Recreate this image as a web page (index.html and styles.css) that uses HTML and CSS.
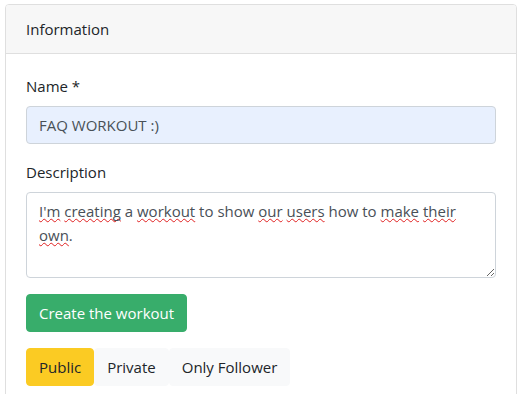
FILE: index.html
```html
<!DOCTYPE html>
<html lang="en">
<head>
<meta charset="utf-8">
<title>Information</title>
<link rel="stylesheet" href="styles.css">
</head>
<body>
<div class="page">
  <div class="card">
    <div class="card-header">Information</div>
    <div class="card-body">
      <div class="form-group">
        <label class="label">Name *</label>
        <div class="input autofill">FAQ WORKOUT :)</div>
      </div>
      <div class="form-group">
        <label class="label">Description</label>
        <div class="textarea"><span class="sp">I'm</span> <span class="sp">creating</span> a <span class="sp">workout</span> to show <span class="sp">our</span> <span class="sp">users</span> how to <span class="sp">make</span> <span class="sp">their</span> <span class="sp">own</span>.</div>
      </div>
      <div class="form-group">
        <button class="btn btn-success">Create the workout</button>
      </div>
      <div class="btn-group">
        <button class="btn btn-warning">Public</button>
        <button class="btn btn-light">Private</button>
        <button class="btn btn-light">Only Follower</button>
      </div>
    </div>
  </div>
</div>
</body>
</html>
```
FILE: styles.css
```css
* { box-sizing: border-box; }
html, body { margin: 0; padding: 0; background: #fff; }
body {
  font-family: "Open Sans", "Noto Sans", sans-serif;
  font-size: 15px;
  line-height: 24px;
  color: #212529;
}
.page { padding: 4px 5px; }
.card {
  border: 1px solid #dfdfdf;
  border-radius: 4px;
  background: #fff;
}
.card-header {
  background: #f7f7f7;
  border-bottom: 1px solid #dfdfdf;
  padding: 12px 20px;
  border-radius: 3px 3px 0 0;
}
.card-body { padding: 20px; }
.form-group { margin-bottom: 16px; }
.label { display: block; margin-bottom: 8px; }
.input {
  height: 38px;
  padding: 6px 12px;
  border: 1px solid #ced4da;
  border-radius: 4px;
  color: #495057;
}
.autofill { background: #e8f0fe; }
.textarea {
  height: 86px;
  padding: 6px 12px;
  border: 1px solid #ced4da;
  border-radius: 4px;
  color: #495057;
  overflow: auto;
  resize: vertical;
}
.sp {
  text-decoration: underline wavy #e02020;
  text-decoration-thickness: 1px;
  text-underline-offset: 1px;
  text-decoration-skip-ink: none;
}
.btn {
  font-family: inherit;
  font-size: 15px;
  line-height: 24px;
  height: 38px;
  padding: 6px 12px;
  border: 1px solid transparent;
  border-radius: 4px;
  cursor: pointer;
}
.btn-success { background: #38ad6b; border-color: #38ad6b; color: #fff; }
.btn-group { display: flex; }
.btn-warning { background: #fbcb23; border-color: #fbcb23; color: #212529; }
.btn-light { background: #f8f9fa; border-color: #f8f9fa; color: #212529; }
```
